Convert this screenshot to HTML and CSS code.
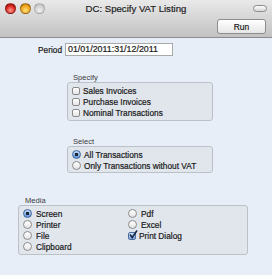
FILE: index.html
```html
<!DOCTYPE html>
<html lang="en">
<head>
	<meta charset="UTF-8">
	<title>DC: Specify VAT Listing</title>
	<link rel="stylesheet" href="styles.css">
</head>
<body>
	<div class="window">
		<div class="header">
			<div class="titlerow">
				<div class="lights">
					<span class="light red"></span>
					<span class="light orange"></span>
					<span class="light grey"></span>
				</div>
				<div class="title">DC: Specify VAT Listing</div>
				<span class="pill"></span>
			</div>
			<div class="toolbar">
				<button class="run">Run</button>
			</div>
		</div>

		<div class="content">
			<div class="period">
				<span class="plabel">Period</span>
				<span class="input">01/01/2011:31/12/2011</span>
			</div>

			<div class="section specify">
				<div class="glabel">Specify</div>
				<div class="group">
					<div class="row"><span class="check"></span>Sales Invoices</div>
					<div class="row"><span class="check"></span>Purchase Invoices</div>
					<div class="row"><span class="check"></span>Nominal Transactions</div>
				</div>
			</div>

			<div class="section select">
				<div class="glabel">Select</div>
				<div class="group">
					<div class="row"><span class="radio on"></span>All Transactions</div>
					<div class="row"><span class="radio"></span>Only Transactions without VAT</div>
				</div>
			</div>

			<div class="section media">
				<div class="glabel">Media</div>
				<div class="group grid">
					<div class="row"><span class="radio on"></span>Screen</div>
					<div class="row"><span class="radio"></span>Pdf</div>
					<div class="row"><span class="radio"></span>Printer</div>
					<div class="row"><span class="radio"></span>Excel</div>
					<div class="row"><span class="radio"></span>File</div>
					<div class="row"><span class="check on">
						<svg width="10" height="10" viewBox="0 0 10 10"><path d="M2 4.5 L4.2 7.5 L9 0.5" fill="none" stroke="#1b2a4a" stroke-width="1.6"/></svg>
					</span>Print Dialog</div>
					<div class="row"><span class="radio"></span>Clipboard</div>
				</div>
			</div>
		</div>
	</div>
</body>
</html>
```

FILE: styles.css
```css
body{
	margin: 0;
	font-family: "Liberation Sans", Arial, sans-serif;
	color: #1a1a1a;
}
.window{
	width: 272px;
	height: 275px;
	background: #e8eef7;
	overflow: hidden;
	-webkit-text-stroke: 0.2px;
}
.header{
	height: 37px;
	border-bottom: 1px solid #8c8c8c;
	background: linear-gradient(#e9e9e9, #c2c2c2);
}
.titlerow{
	display: grid;
	grid-template-columns: 1fr auto 1fr;
	align-items: center;
	height: 14px;
	padding-top: 1px;
}
.lights{
	display: flex;
	gap: 3.5px;
	padding-left: 5px;
}
.light{
	width: 11px;
	height: 11px;
	border-radius: 50%;
	box-sizing: border-box;
	border: 1px solid rgba(0,0,0,.3);
}
.red{ background: radial-gradient(circle at 50% 70%, #ff9a8f, #d4211a 60%, #8c1010); }
.orange{ background: radial-gradient(circle at 50% 70%, #ffe27a, #f0a21a 60%, #a8620a); }
.grey{ background: radial-gradient(circle at 50% 70%, #f2f2f2, #c8c8c8 70%, #a9a9a9); border-color: rgba(0,0,0,.15); }
.title{
	font-size: 9.6px;
	color: #222;
}
.pill{
	justify-self: end;
	margin-right: 5px;
	width: 14px;
	height: 7px;
	box-sizing: border-box;
	border: 1px solid #8a8a8a;
	border-radius: 4px;
	background: linear-gradient(#fdfdfd, #d6d6d6);
}
.toolbar{
	display: flex;
	justify-content: flex-end;
	padding: 4px 6px 0 0;
}
.run{
	width: 49px;
	height: 15px;
	padding: 0;
	border: 1px solid #8d8d8d;
	border-radius: 3px;
	background: linear-gradient(#ffffff, #e6e6e6);
	font-family: "Liberation Sans", Arial, sans-serif;
	font-size: 8.4px;
	color: #1a1a1a;
	-webkit-text-stroke: 0.2px;
}
.content{
	padding-top: 5px;
	font-size: 8.3px;
}
.period{
	display: flex;
	align-items: center;
	height: 13px;
}
.plabel{
	width: 65px;
	text-align: right;
	padding-right: 3px;
	box-sizing: border-box;
}
.input{
	width: 108px;
	height: 13px;
	box-sizing: border-box;
	border: 1px solid #a9a9a9;
	background: #fff;
	padding-left: 2px;
	font-size: 8.9px;
	line-height: 11px;
}
.section{
	margin-left: 67px;
	width: 146px;
}
.specify{ margin-top: 17px; }
.select{ margin-top: 16px; }
.media{
	margin-top: 23px;
	margin-left: 18px;
	width: 230px;
}
.glabel{
	height: 9px;
	line-height: 9px;
	padding-left: 6px;
	font-size: 7.6px;
	color: #3a3a3a;
	-webkit-text-stroke: 0;
}
.media .glabel{
	padding-left: 7px;
}
.group{
	border: 1px solid #bcc1c8;
	border-radius: 3px;
	background: #e1e6ed;
	padding: 2px 4px 2px 4px;
}
.select .group{
	padding-bottom: 1px;
}
.grid{
	display: grid;
	grid-template-columns: 105px 1fr;
}
.row{
	display: flex;
	align-items: center;
	height: 11px;
	white-space: nowrap;
}
.check{
	width: 8px;
	height: 8px;
	box-sizing: border-box;
	border: 1px solid #8b8b8b;
	border-radius: 2px;
	background: linear-gradient(#ffffff, #e4e4e4);
	margin-right: 3px;
	position: relative;
}
.check svg{
	position: absolute;
	left: -1px;
	top: -3px;
}
.check.on{
	border-color: #4c6fa0;
	background: linear-gradient(#cfe2fb, #7ea7e0);
}
.radio{
	width: 9px;
	height: 9px;
	box-sizing: border-box;
	border: 1px solid #8b8b8b;
	border-radius: 50%;
	background: linear-gradient(#ffffff, #e4e4e4);
	margin-right: 3px;
}
.media .radio{
	margin-right: 4px;
}
.radio.on{
	border-color: #3f6598;
	background: radial-gradient(circle, #1c2436 1.6px, transparent 2px), linear-gradient(#c6ddfa, #5f93d8);
}
```
